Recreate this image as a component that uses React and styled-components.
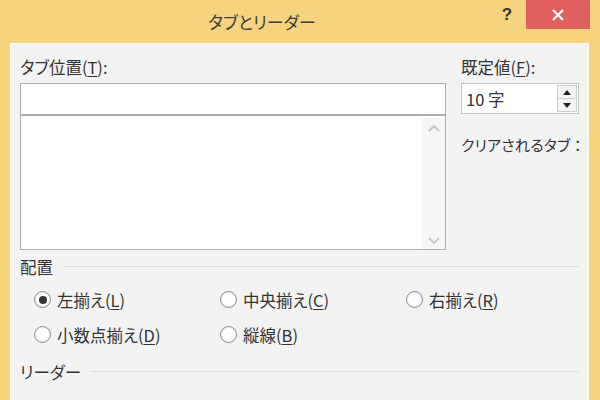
import React from 'react'
import styled, { createGlobalStyle } from 'styled-components'

const GlobalStyle = createGlobalStyle`
  html, body {
    margin: 0;
    padding: 0;
    background: #f6d47d;
  }
  body {
    font-family: 'Noto Sans CJK JP', 'Noto Sans', sans-serif;
    font-feature-settings: 'palt';
    color: #333;
  }
`

const Frame = styled.div`
  width: 600px;
  height: 400px;
  box-sizing: border-box;
  background: #f6d47d;
  padding: 0 11px 0 10px;
  display: flex;
  flex-direction: column;
  overflow: hidden;
`

const TitleBar = styled.div`
  height: 43px;
  flex-shrink: 0;
  display: flex;
  align-items: flex-start;
`

const Title = styled.div`
  flex: 1;
  text-align: center;
  padding-left: 22px;
  font-size: 17px;
  line-height: 44px;
  color: #3c3c3c;
`

const HelpButton = styled.div`
  width: 30px;
  height: 29px;
  line-height: 30px;
  text-align: center;
  font-family: 'Liberation Sans', sans-serif;
  font-weight: bold;
  font-size: 17px;
  color: #333;
`

const CloseButton = styled.div`
  width: 64px;
  height: 29px;
  margin-left: 4px;
  margin-right: -1px;
  background: #e0605f;
  display: flex;
  align-items: center;
  justify-content: center;
`

const Panel = styled.div`
  flex: 1;
  background: #f3f3f3;
  border: 1px solid #fbfbfb;
  border-bottom: none;
  padding: 11px 9px 0 9px;
`

const TopGrid = styled.div`
  display: grid;
  grid-template-columns: 426px 1fr;
  column-gap: 15px;
`

const Label = styled.div`
  font-size: 16.5px;
  line-height: 24px;
  margin-bottom: 4px;
  white-space: nowrap;
  u {
    text-decoration: underline;
    text-underline-offset: 2px;
  }
`

const TextInput = styled.div`
  height: 30px;
  border: 1px solid #abadb3;
  background: #fff;
`

const ListBox = styled.div`
  height: 133px;
  border: 1px solid #abadb3;
  background: #fff;
  display: flex;
`

const ListBody = styled.div`
  flex: 1;
`

const ScrollBar = styled.div`
  width: 23px;
  margin-top: 2px;
  background: #f6f6f6;
  display: flex;
  flex-direction: column;
  justify-content: space-between;
  align-items: center;
  padding: 6px 0 4px;
`

const SpinBox = styled.div`
  width: 116px;
  height: 29px;
  border: 1px solid #c5c5c5;
  background: #fff;
  display: flex;
  align-items: center;
`

const SpinValue = styled.div`
  flex: 1;
  padding-left: 4px;
  font-size: 16.5px;
  line-height: 20px;
`

const SpinButtons = styled.div`
  width: 20px;
  height: 27px;
  margin-right: 1px;
  display: flex;
  flex-direction: column;
`

const SpinButton = styled.div`
  flex: 1;
  border: 1px solid #d0d0d0;
  background: #f4f4f4;
  display: flex;
  align-items: center;
  justify-content: center;
  & + & {
    border-top: none;
  }
`

const ClearLabel = styled.div`
  margin-top: 19px;
  font-size: 15px;
  line-height: 24px;
  white-space: nowrap;
  letter-spacing: 0.2px;
`

const SectionHead = styled.div`
  display: flex;
  align-items: center;
  gap: 10px;
  margin-top: ${p => p.$top}px;
  font-size: 16.5px;
  line-height: 24px;
  &::after {
    content: '';
    flex: 1;
    height: 1px;
    background: #dedede;
    margin-top: -2px;
  }
`

const RadioGrid = styled.div`
  display: grid;
  grid-template-columns: repeat(3, 186px);
  grid-auto-rows: 35px;
  padding-left: 14px;
  margin-top: 3px;
`

const RadioItem = styled.div`
  display: flex;
  align-items: center;
  gap: 6px;
  font-size: 16.5px;
  white-space: nowrap;
  u {
    text-decoration: underline;
    text-underline-offset: 2px;
  }
`

const Circle = styled.span`
  width: 15px;
  height: 15px;
  border-radius: 50%;
  border: 1px solid #8c8c8c;
  background: #fff;
  box-shadow: inset 0 0 0 1px #ededed;
  display: flex;
  align-items: center;
  justify-content: center;
  flex-shrink: 0;
  &::after {
    content: '';
    width: 8px;
    height: 8px;
    border-radius: 50%;
    background: ${p => (p.$checked ? '#333' : 'transparent')};
  }
`

function Radio({ checked, children }) {
  return (
    <RadioItem>
      <Circle $checked={checked} />
      <span>{children}</span>
    </RadioItem>
  )
}

function Chevron({ up }) {
  return (
    <svg width="12" height="8" viewBox="0 0 12 8">
      <path
        d={up ? 'M1 7 L6 2 L11 7' : 'M1 1 L6 6 L11 1'}
        fill="none"
        stroke="#c9c9c9"
        strokeWidth="2"
      />
    </svg>
  )
}

function Triangle({ up }) {
  return (
    <svg width="8" height="5" viewBox="0 0 8 5">
      <path d={up ? 'M0 5 L4 0 L8 5 Z' : 'M0 0 L4 5 L8 0 Z'} fill="#222" />
    </svg>
  )
}

export default function App() {
  return (
    <>
      <GlobalStyle />
      <Frame>
        <TitleBar>
          <Title>タブとリーダー</Title>
          <HelpButton>?</HelpButton>
          <CloseButton>
            <svg width="12" height="12" viewBox="0 0 12 12">
              <path d="M1 1 L11 11 M11 1 L1 11" stroke="#fff" strokeWidth="2.2" />
            </svg>
          </CloseButton>
        </TitleBar>
        <Panel>
          <TopGrid>
            <div>
              <Label>
                タブ位置(<u>T</u>):
              </Label>
              <TextInput />
              <ListBox>
                <ListBody />
                <ScrollBar>
                  <Chevron up />
                  <Chevron />
                </ScrollBar>
              </ListBox>
            </div>
            <div>
              <Label>
                既定値(<u>F</u>):
              </Label>
              <SpinBox>
                <SpinValue>10 字</SpinValue>
                <SpinButtons>
                  <SpinButton>
                    <Triangle up />
                  </SpinButton>
                  <SpinButton>
                    <Triangle />
                  </SpinButton>
                </SpinButtons>
              </SpinBox>
              <ClearLabel>クリアされるタブ ：</ClearLabel>
            </div>
          </TopGrid>
          <SectionHead $top={5}>配置</SectionHead>
          <RadioGrid>
            <Radio checked>
              左揃え(<u>L</u>)
            </Radio>
            <Radio>
              中央揃え(<u>C</u>)
            </Radio>
            <Radio>
              右揃え(<u>R</u>)
            </Radio>
            <Radio>
              小数点揃え(<u>D</u>)
            </Radio>
            <Radio>
              縦線(<u>B</u>)
            </Radio>
          </RadioGrid>
          <SectionHead $top={8}>リーダー</SectionHead>
        </Panel>
      </Frame>
    </>
  )
}
